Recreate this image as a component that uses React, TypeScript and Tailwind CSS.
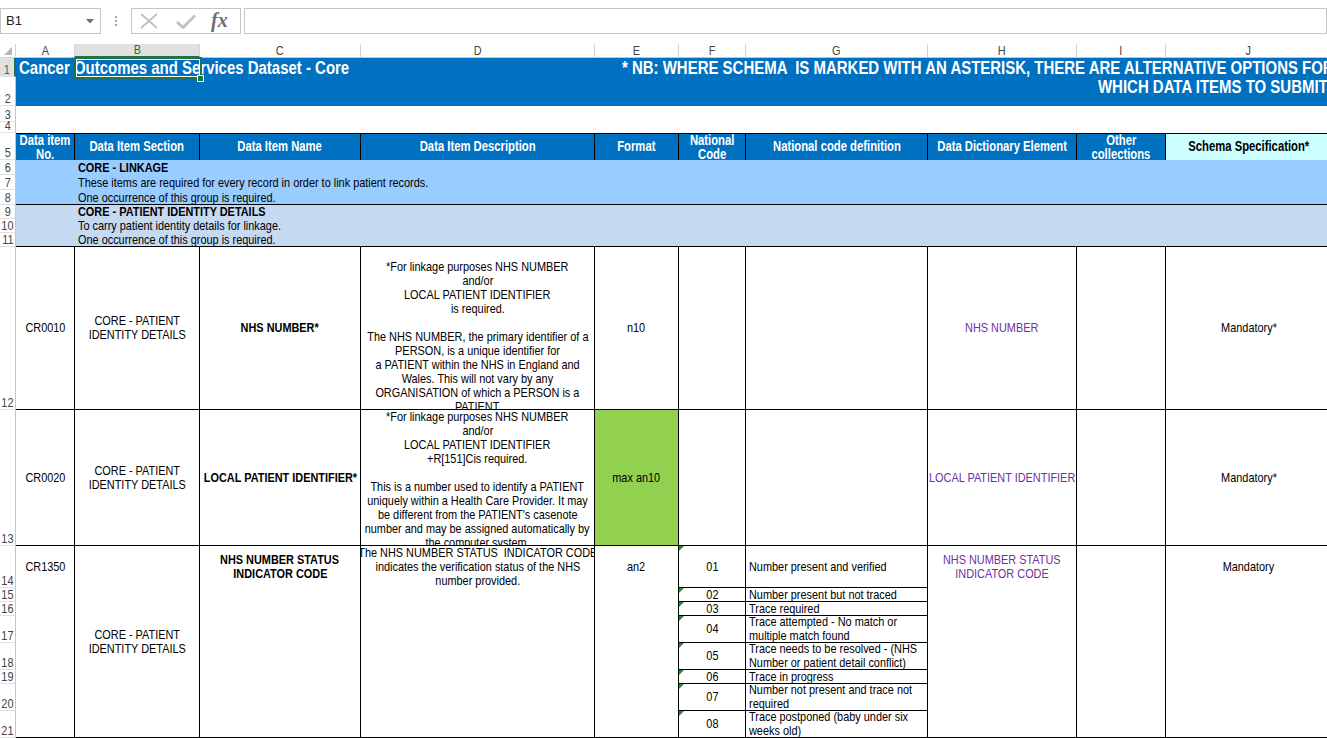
import React from "react";

const FONT = "font-['Liberation_Sans',Arial,sans-serif]";

const ROW_START = [
  "row-start-2", "row-start-3", "row-start-4", "row-start-5", "row-start-6",
  "row-start-7", "row-start-8", "row-start-9", "row-start-10", "row-start-11",
  "row-start-12", "row-start-13", "row-start-14", "row-start-15", "row-start-16",
  "row-start-17", "row-start-18", "row-start-19", "row-start-20", "row-start-21",
  "row-start-22",
];

const COL_START = [
  "col-start-2", "col-start-3", "col-start-4", "col-start-5", "col-start-6",
  "col-start-7", "col-start-8", "col-start-9", "col-start-10", "col-start-11",
];

const LETTERS = ["A", "B", "C", "D", "E", "F", "G", "H", "I", "J"];

/* narrow text: Arial Narrow look via horizontal scale */
function T({ children, left }: { children: React.ReactNode; left?: boolean }) {
  return (
    <span
      className={`inline-block whitespace-pre scale-x-[0.82] ${
        left ? "origin-left" : "origin-center"
      }`}
    >
      {children}
    </span>
  );
}

function Lines({ lines, left }: { lines: string[]; left?: boolean }) {
  return (
    <>
      {lines.map((l, i) => (
        <div key={i} className="h-[14px] whitespace-pre">
          <T left={left}>{l || "\u00a0"}</T>
        </div>
      ))}
    </>
  );
}

function FormulaBar() {
  return (
    <div className="h-[44px] flex items-start pt-[8px] font-['Liberation_Sans',Arial,sans-serif]">
      <div className="w-[101px] h-[26px] border border-[#c6c6c6] flex items-center pl-[5px] pr-[5px] justify-between text-[13px] text-[#222]">
        <span>B1</span>
        <svg width="8" height="5" viewBox="0 0 8 5" className="mr-[1px]">
          <polygon points="0,0 8,0 4,4.5" fill="#6f6f6f" />
        </svg>
      </div>
      <div className="w-[30px] h-[26px] flex flex-col items-center justify-center gap-[2px]">
        <div className="w-[2px] h-[2px] bg-[#a6a6a6]" />
        <div className="w-[2px] h-[2px] bg-[#a6a6a6]" />
        <div className="w-[2px] h-[2px] bg-[#a6a6a6]" />
      </div>
      <div className="w-[110px] h-[26px] border border-[#c6c6c6] flex items-center">
        <svg width="18" height="16" viewBox="0 0 18 16" className="ml-[8px]">
          <path d="M1 1 L17 15 M17 1 L1 15" stroke="#c2c2c2" strokeWidth="2" fill="none" />
        </svg>
        <svg width="20" height="15" viewBox="0 0 20 15" className="ml-[18px]">
          <path d="M1 8 L7 13.5 L19 1.5" stroke="#c2c2c2" strokeWidth="3" fill="none" />
        </svg>
        <span className="ml-[15px] italic font-bold font-['Liberation_Serif',serif] text-[20px] leading-[20px] text-[#6e6e6e] -mt-[2px]">
          fx
        </span>
      </div>
      <div className="ml-[3px] flex-1 h-[26px] border border-[#c6c6c6]" />
    </div>
  );
}

const headers: { lines: string[]; j?: boolean }[] = [
  { lines: ["Data item", "No."] },
  { lines: ["Data Item Section"] },
  { lines: ["Data Item Name"] },
  { lines: ["Data Item Description"] },
  { lines: ["Format"] },
  { lines: ["National", "Code"] },
  { lines: ["National code definition"] },
  { lines: ["Data Dictionary Element"] },
  { lines: ["Other", "collections"] },
  { lines: ["Schema Specification*"], j: true },
];

const codes: { code: string; lines: string[]; rs: string }[] = [
  { code: "01", lines: ["Number present and verified"], rs: "row-start-15" },
  { code: "02", lines: ["Number present but not traced"], rs: "row-start-16" },
  { code: "03", lines: ["Trace required"], rs: "row-start-17" },
  { code: "04", lines: ["Trace attempted - No match or", "multiple match found"], rs: "row-start-18" },
  { code: "05", lines: ["Trace needs to be resolved - (NHS", "Number or patient detail conflict)"], rs: "row-start-19" },
  { code: "06", lines: ["Trace in progress"], rs: "row-start-20" },
  { code: "07", lines: ["Number not present and trace not", "required"], rs: "row-start-21" },
  { code: "08", lines: ["Trace postponed (baby under six", "weeks old)"], rs: "row-start-22" },
];

const d12 = [
  "*For linkage purposes NHS NUMBER",
  "and/or",
  "LOCAL PATIENT IDENTIFIER",
  "is required.",
  "",
  "The NHS NUMBER, the primary identifier of a",
  "PERSON, is a unique identifier for",
  "a PATIENT within the NHS in England and",
  "Wales. This will not vary by any",
  "ORGANISATION of which a PERSON is a",
  "PATIENT",
];

const d13 = [
  "*For linkage purposes NHS NUMBER",
  "and/or",
  "LOCAL PATIENT IDENTIFIER",
  "+R[151]Cis required.",
  "",
  "This is a number used to identify a PATIENT",
  "uniquely within a Health Care Provider. It may",
  "be different from the PATIENT's casenote",
  "number and may be assigned automatically by",
  "the computer system.",
];

const d14 = [
  "The NHS NUMBER STATUS  INDICATOR CODE",
  "indicates the verification status of the NHS",
  "number provided.",
];

const B = "border-r border-b border-black overflow-hidden";

export default function App() {
  return (
    <div className="w-[1327px] h-[738px] overflow-hidden bg-white relative text-black">
      <FormulaBar />
      <div
        className={`grid grid-cols-[16px_59px_125px_161px_234px_84px_67px_182px_149px_89px_166px] grid-rows-[14px_19px_29px_16px_11px_27px_15px_15px_15px_14px_14px_14px_163px_136px_42px_14px_14px_27px_27px_14px_27px_27px] w-[1332px] text-[13.3px] leading-[14px] ${FONT}`}
      >
        {/* corner */}
        <div className="col-start-1 row-start-1 border-r border-b border-[#d4d4d4] flex items-end justify-end pr-[3px] pb-[2px]">
          <svg width="8" height="8" viewBox="0 0 8 8">
            <polygon points="8,0 8,8 0,8" fill="#b6b6b6" />
          </svg>
        </div>
        {/* column letters */}
        {LETTERS.map((l, i) => (
          <div
            key={l}
            className={`${COL_START[i]} row-start-1 flex items-center justify-center border-r border-[#d4d4d4] ${
              l === "B"
                ? "bg-[#e1e1e1] text-[#217346] border-b-2 border-b-[#217346]"
                : "text-[#444] border-b border-b-[#c6c6c6]"
            }`}
          >
            <T>{l}</T>
          </div>
        ))}
        {/* row headers */}
        {ROW_START.map((rs, i) => (
          <div
            key={rs}
            className={`col-start-1 ${rs} flex items-end justify-center leading-[13px] border-b border-[#e1e1e1] ${
              i === 0
                ? "bg-[#e1e1e1] text-[#217346] border-r-2 border-r-[#217346]"
                : "text-[#444] border-r border-r-[#c6c6c6]"
            }`}
          >
            <T>{i + 1}</T>
          </div>
        ))}

        {/* title */}
        <div className="col-start-2 col-span-10 row-start-2 row-span-2 bg-[#0070c0] text-white font-bold text-[18.25px] leading-[19px] flex overflow-hidden">
          <div className="w-[606px] shrink-0 pl-[3px] whitespace-nowrap">
            <T left>Cancer Outcomes and Services Dataset - Core</T>
          </div>
          <div className="flex flex-col whitespace-nowrap">
            <div>
              <T left>* NB: WHERE SCHEMA  IS MARKED WITH AN ASTERISK, THERE ARE ALTERNATIVE OPTIONS FOR</T>
            </div>
            <div className="pl-[476px]">
              <T left>WHICH DATA ITEMS TO SUBMIT</T>
            </div>
          </div>
        </div>

        {/* table header */}
        {headers.map((h, i) => (
          <div
            key={i}
            className={`${COL_START[i]} row-start-6 border-t border-r border-black font-bold text-[13.75px] flex flex-col items-center overflow-hidden ${
              h.lines.length > 1 ? "justify-start" : "justify-center"
            } ${h.j ? "bg-[#ccffff] text-black" : "bg-[#0070c0] text-white"}`}
          >
            <Lines lines={h.lines} />
          </div>
        ))}

        {/* group 1 */}
        <div className="col-start-2 col-span-10 row-start-7 row-span-3 bg-[#99ccff] border-b border-black flex flex-col pl-[62px]">
          <div className="h-[15px] leading-[15px] font-bold"><T left>CORE - LINKAGE</T></div>
          <div className="h-[15px] leading-[15px]"><T left>These items are required for every record in order to link patient records.</T></div>
          <div className="h-[14px] leading-[15px]"><T left>One occurrence of this group is required.</T></div>
        </div>
        {/* group 2 */}
        <div className="col-start-2 col-span-10 row-start-10 row-span-3 bg-[#c5d9f1] border-b border-black flex flex-col pl-[62px]">
          <div className="h-[14px] font-bold"><T left>CORE - PATIENT IDENTITY DETAILS</T></div>
          <div className="h-[14px]"><T left>To carry patient identity details for linkage.</T></div>
          <div className="h-[13px]"><T left>One occurrence of this group is required.</T></div>
        </div>

        {/* row 12 */}
        <div className={`col-start-2 row-start-13 ${B} flex items-center justify-center`}><T>CR0010</T></div>
        <div className={`col-start-3 row-start-13 ${B} flex flex-col items-center justify-center`}>
          <Lines lines={["CORE - PATIENT", "IDENTITY DETAILS"]} />
        </div>
        <div className={`col-start-4 row-start-13 ${B} flex items-center justify-center font-bold`}><T>NHS NUMBER*</T></div>
        <div className={`col-start-5 row-start-13 ${B} flex flex-col items-center pt-[13px]`}>
          <Lines lines={d12} />
        </div>
        <div className={`col-start-6 row-start-13 ${B} flex items-center justify-center`}><T>n10</T></div>
        <div className={`col-start-7 row-start-13 ${B}`} />
        <div className={`col-start-8 row-start-13 ${B}`} />
        <div className={`col-start-9 row-start-13 ${B} flex items-center justify-center text-[#7030a0]`}><T>NHS NUMBER</T></div>
        <div className={`col-start-10 row-start-13 ${B}`} />
        <div className={`col-start-11 row-start-13 ${B} flex items-center justify-center`}><T>Mandatory*</T></div>

        {/* row 13 */}
        <div className={`col-start-2 row-start-14 ${B} flex items-center justify-center`}><T>CR0020</T></div>
        <div className={`col-start-3 row-start-14 ${B} flex flex-col items-center justify-center`}>
          <Lines lines={["CORE - PATIENT", "IDENTITY DETAILS"]} />
        </div>
        <div className={`col-start-4 row-start-14 ${B} flex items-center justify-center font-bold`}><T>LOCAL PATIENT IDENTIFIER*</T></div>
        <div className={`col-start-5 row-start-14 ${B} flex flex-col items-center`}>
          <Lines lines={d13} />
        </div>
        <div className={`col-start-6 row-start-14 ${B} bg-[#92d050] flex items-center justify-center`}><T>max an10</T></div>
        <div className={`col-start-7 row-start-14 ${B}`} />
        <div className={`col-start-8 row-start-14 ${B}`} />
        <div className={`col-start-9 row-start-14 ${B} flex items-center justify-center text-[#7030a0]`}><T>LOCAL PATIENT IDENTIFIER</T></div>
        <div className={`col-start-10 row-start-14 ${B}`} />
        <div className={`col-start-11 row-start-14 ${B} flex items-center justify-center`}><T>Mandatory*</T></div>

        {/* rows 14-21 */}
        <div className={`col-start-2 row-start-15 row-span-8 ${B}`}>
          <div className="h-[42px] flex items-center justify-center"><T>CR1350</T></div>
        </div>
        <div className={`col-start-3 row-start-15 row-span-8 ${B} flex flex-col items-center justify-center`}>
          <Lines lines={["CORE - PATIENT", "IDENTITY DETAILS"]} />
        </div>
        <div className={`col-start-4 row-start-15 row-span-8 ${B}`}>
          <div className="h-[42px] flex flex-col items-center justify-center font-bold">
            <Lines lines={["NHS NUMBER STATUS", "INDICATOR CODE"]} />
          </div>
        </div>
        <div className={`col-start-5 row-start-15 row-span-8 ${B}`}>
          <div className="h-[42px] flex flex-col items-center justify-center">
            <Lines lines={d14} />
          </div>
        </div>
        <div className={`col-start-6 row-start-15 row-span-8 ${B}`}>
          <div className="h-[42px] flex items-center justify-center"><T>an2</T></div>
        </div>
        {codes.map((c) => (
          <React.Fragment key={c.code}>
            <div className={`col-start-7 ${c.rs} ${B} relative flex items-center justify-center`}>
              <svg width="5" height="5" viewBox="0 0 5 5" className="absolute left-0 top-0">
                <polygon points="0,0 5,0 0,5" fill="#1e8c2f" />
              </svg>
              <T>{c.code}</T>
            </div>
            <div className={`col-start-8 ${c.rs} ${B} flex flex-col justify-center pl-[3px]`}>
              <Lines lines={c.lines} left />
            </div>
          </React.Fragment>
        ))}
        <div className={`col-start-9 row-start-15 row-span-8 ${B}`}>
          <div className="h-[42px] flex flex-col items-center justify-center text-[#7030a0]">
            <Lines lines={["NHS NUMBER STATUS", "INDICATOR CODE"]} />
          </div>
        </div>
        <div className={`col-start-10 row-start-15 row-span-8 ${B}`} />
        <div className={`col-start-11 row-start-15 row-span-8 ${B}`}>
          <div className="h-[42px] flex items-center justify-center"><T>Mandatory</T></div>
        </div>
      </div>

      {/* selection overlay on B1 */}
      <div className="absolute left-[74px] top-[57px] w-[128px] h-[22px] border-2 border-[#217346]">
        <div className="absolute inset-0 border border-white" />
      </div>
      <div className="absolute left-[197px] top-[75px] w-[7px] h-[7px] bg-[#217346] border border-white" />
    </div>
  );
}
